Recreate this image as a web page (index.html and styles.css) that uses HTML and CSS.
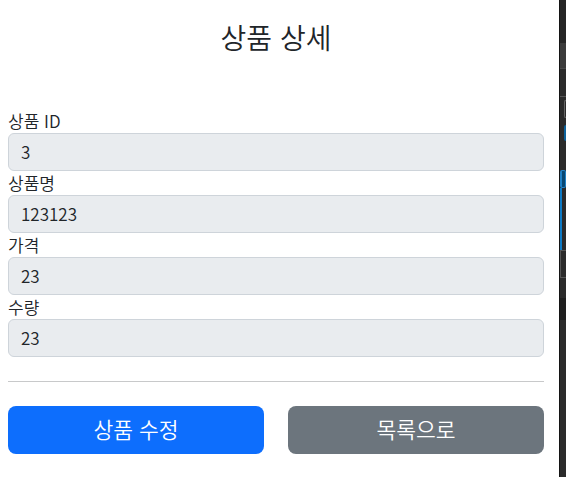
FILE: index.html
```html
<!DOCTYPE html>
<html lang="ko">

<head>
  <meta charset="UTF-8">
  <meta name="viewport" content="width=device-width, initial-scale=1.0">
  <title>상품 상세</title>
  <link rel="stylesheet" href="styles.css">
</head>

<body>

  <div class="page">
    <div class="container">
      <div class="page-header">
        <h2>상품 상세</h2>
      </div>

      <div class="field">
        <label for="itemId">상품 ID</label>
        <input type="text" id="itemId" class="form-control" value="3" readonly>
      </div>
      <div class="field">
        <label for="itemName">상품명</label>
        <input type="text" id="itemName" class="form-control" value="123123" readonly>
      </div>
      <div class="field">
        <label for="price">가격</label>
        <input type="text" id="price" class="form-control" value="23" readonly>
      </div>
      <div class="field">
        <label for="quantity">수량</label>
        <input type="text" id="quantity" class="form-control" value="23" readonly>
      </div>

      <hr class="divider">

      <div class="actions">
        <button class="btn btn-primary" type="button">상품 수정</button>
        <button class="btn btn-secondary" type="button">목록으로</button>
      </div>
    </div>
  </div>

  <!-- edge of the neighbouring window -->
  <div class="side-panel">
    <div class="sp-top"></div>
    <div class="sp-tab"></div>
    <div class="sp-row"></div>
    <div class="sp-row sp-boxed"><span class="sp-box"></span></div>
    <div class="sp-row sp-short"><span class="sp-dot"></span></div>
    <div class="sp-gap"></div>
    <div class="sp-select"></div>
    <div class="sp-bar"></div>
    <div class="sp-outline"></div>
    <div class="sp-space"></div>
    <div class="sp-dark"></div>
  </div>

</body>

</html>
```

FILE: styles.css
```css
* {
  box-sizing: border-box;
}

body {
  font-family: "Noto Sans CJK KR", sans-serif;
  font-size: 17px;
  font-weight: 350;
  line-height: 1.5;
  color: #212529;
  background-color: #fff;
  margin: 0;
  display: flex;
  height: 100vh;
  overflow: hidden;
}

.page {
  flex: 1;
  padding: 0 15px 0 8px;
}

.page-header {
  text-align: center;
  padding: 22px 0 56px;
}

.page-header h2 {
  margin: 0;
  font-size: 28px;
  font-weight: 350;
  line-height: 31px;
}

.field label {
  display: block;
  line-height: 23px;
  padding-bottom: 1px;
}

.form-control {
  display: block;
  width: 100%;
  height: 38px;
  padding: 5px 12px 7px;
  font-family: inherit;
  font-size: 17px;
  font-weight: inherit;
  color: #212529;
  background-color: #e9ecef;
  border: 1px solid #ced4da;
  border-radius: 6px;
  outline: none;
}

.divider {
  margin: 24px 0;
  border: 0;
  border-top: 1px solid #c8c9ca;
}

.actions {
  display: grid;
  grid-template-columns: 1fr 1fr;
  gap: 24px;
}

.btn {
  height: 48px;
  padding: 7px 16px 9px;
  font-family: inherit;
  font-size: 21.5px;
  font-weight: inherit;
  line-height: 30px;
  color: #fff;
  border: 1px solid transparent;
  border-radius: 8px;
  cursor: pointer;
}

.btn-primary {
  background-color: #0d6efd;
}

.btn-secondary {
  background-color: #6c757d;
}

/* neighbouring window strip */
.side-panel {
  width: 7px;
  flex-shrink: 0;
  background-color: #2b2b2b;
  border-left: 1px solid #141414;
}

.sp-top {
  height: 43px;
  background-color: #262626;
}

.sp-tab {
  height: 26px;
  background-color: #3b3b3b;
  border-bottom: 1px solid #4a4a4a;
}

.sp-row {
  height: 28px;
  border-bottom: 1px solid #555;
}

.sp-boxed {
  height: 27px;
  border-bottom: none;
  padding-top: 3px;
}

.sp-box {
  display: block;
  height: 18px;
  margin-left: 4px;
  border: 1px solid #666;
  border-right: none;
  border-radius: 3px 0 0 3px;
}

.sp-short {
  height: 25px;
  border-bottom: none;
  padding-top: 1px;
}

.sp-dot {
  display: block;
  height: 16px;
  margin-left: 4px;
  background-color: #0e639c;
  border-radius: 4px 0 0 4px;
}

.sp-gap {
  height: 21px;
}

.sp-select {
  height: 18px;
  border: 1px solid #1f7fc4;
  border-left-width: 2px;
  background-color: #094771;
  border-radius: 2px;
}

.sp-bar {
  height: 62px;
  border-left: 2px solid #0e7ac4;
  background-color: #2b2b2b;
}

.sp-outline {
  height: 28px;
  border: 1px solid #555;
  border-right: none;
}

.sp-space {
  height: 20px;
}

.sp-dark {
  height: 22px;
  background-color: #1f1f1f;
}
```
